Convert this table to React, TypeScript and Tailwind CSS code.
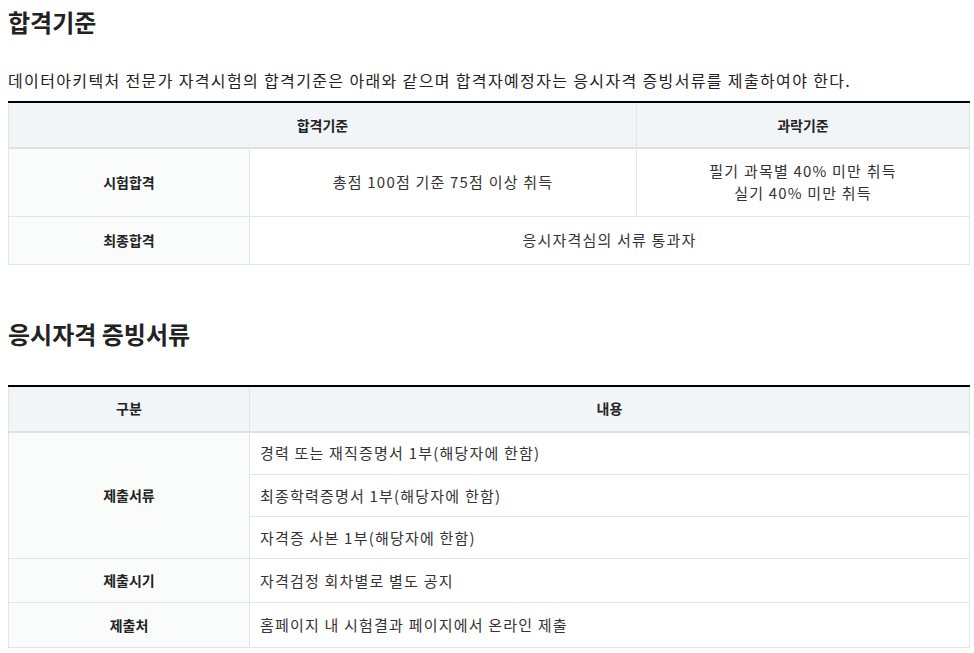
const th = 'border border-[#e1e4e8] border-b-2 border-b-[#dde1e5] bg-[#f2f5f7] px-2.5 h-[46px] text-[14px] font-bold text-[#222] text-center';
const label = 'border border-[#e1e4e8] bg-[#fafbfb] px-2.5 text-[14px] font-bold text-[#222] text-center';
const cell = 'border border-[#e1e4e8] bg-white px-2.5 py-2 text-[15px] text-[#333] leading-[22px] tracking-[0.08em]';

const docs = [
  { text: '경력 또는 재직증명서 1부(해당자에 한함)', h: 'h-[43px]' },
  { text: '최종학력증명서 1부(해당자에 한함)', h: 'h-[42px]' },
  { text: '자격증 사본 1부(해당자에 한함)', h: 'h-[42px]' },
];

export default function App() {
  return (
    <div className="bg-white min-h-screen pl-2 pr-1 pt-1 text-[#222]" style={{ fontFamily: '"Noto Sans CJK KR", "Noto Sans", sans-serif' }}>
      {/* 합격기준 */}
      <h2 className="text-[24px] font-bold leading-[36px] text-[#222]">합격기준</h2>
      <p className="mt-[28px] text-[16px] leading-[24px] tracking-[0.085em] text-[#222]">
        데이터아키텍처 전문가 자격시험의 합격기준은 아래와 같으며 합격자예정자는 응시자격 증빙서류를 제출하여야 한다.
      </p>
      <table className="mt-[9px] w-full border-collapse border-t-2 border-t-black">
        <colgroup>
          <col className="w-[241px]" />
          <col className="w-[387px]" />
          <col />
        </colgroup>
        <thead>
          <tr>
            <th colSpan={2} className={th}>합격기준</th>
            <th className={th}>과락기준</th>
          </tr>
        </thead>
        <tbody>
          <tr className="h-[68px]">
            <td className={label}>시험합격</td>
            <td className={cell + ' text-center'}>총점 100점 기준 75점 이상 취득</td>
            <td className={cell + ' text-center'}>
              필기 과목별 40% 미만 취득
              <br />
              실기 40% 미만 취득
            </td>
          </tr>
          <tr className="h-[48px]">
            <td className={label}>최종합격</td>
            <td colSpan={2} className={cell + ' text-center'}>응시자격심의 서류 통과자</td>
          </tr>
        </tbody>
      </table>

      {/* 응시자격 증빙서류 */}
      <h2 className="mt-[51px] text-[24px] font-bold leading-[36px] text-[#222]">응시자격 증빙서류</h2>
      <table className="mt-[33px] w-full border-collapse border-t-2 border-t-black">
        <colgroup>
          <col className="w-[241px]" />
          <col />
        </colgroup>
        <thead>
          <tr>
            <th className={th}>구분</th>
            <th className={th}>내용</th>
          </tr>
        </thead>
        <tbody>
          {docs.map((d, i) => (
            <tr key={d.text} className={d.h}>
              {i === 0 && (
                <td rowSpan={3} className={label}>제출서류</td>
              )}
              <td className={cell}>{d.text}</td>
            </tr>
          ))}
          <tr className="h-[44px]">
            <td className={label}>제출시기</td>
            <td className={cell}>자격검정 회차별로 별도 공지</td>
          </tr>
          <tr className="h-[45px]">
            <td className={label}>제출처</td>
            <td className={cell}>홈페이지 내 시험결과 페이지에서 온라인 제출</td>
          </tr>
        </tbody>
      </table>
    </div>
  );
}
